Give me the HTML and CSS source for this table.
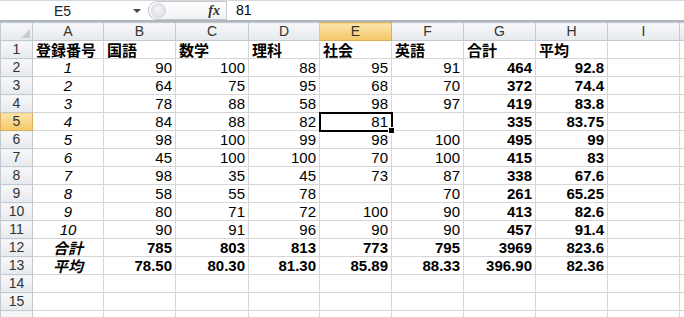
FILE: index.html
```html
<!DOCTYPE html>
<html lang="ja">
<head>
  <meta charset="UTF-8">
  <title>成績一覧</title>
  <link rel="stylesheet" href="styles.css">
</head>
<body>

  <div class="formula-bar">
    <div class="name-box">E5</div>
    <div class="name-arrow"></div>
    <div class="fx-zone">
      <span class="grip"></span>
      <span class="fx">fx</span>
    </div>
    <div class="formula-input">81</div>
  </div>

  <div class="sheet-wrap">
  <table class="sheet">
    <colgroup>
      <col style="width:32px">
      <col style="width:71px">
      <col style="width:72px">
      <col style="width:73px">
      <col style="width:71px">
      <col style="width:72px">
      <col style="width:72px">
      <col style="width:72px">
      <col style="width:72px">
      <col style="width:72px">
      <col style="width:72px">
    </colgroup>
    <tr class="col-heads">
      <th class="corner"><svg width="9" height="9" viewBox="0 0 9 9"><path d="M9 0 L9 9 L0 9 Z" fill="#c9ccd1"/></svg></th>
      <th>A</th><th>B</th><th>C</th><th>D</th><th class="sel">E</th><th>F</th><th>G</th><th>H</th><th>I</th><th></th>
    </tr>
    <tr class="titles">
      <th>1</th>
      <td>登録番号</td><td>国語</td><td>数学</td><td>理科</td><td>社会</td><td>英語</td><td>合計</td><td>平均</td><td></td><td></td>
    </tr>
    <tr><th>2</th><td class="id">1</td><td>90</td><td>100</td><td>88</td><td>95</td><td>91</td><td class="b">464</td><td class="b">92.8</td><td></td><td></td></tr>
    <tr><th>3</th><td class="id">2</td><td>64</td><td>75</td><td>95</td><td>68</td><td>70</td><td class="b">372</td><td class="b">74.4</td><td></td><td></td></tr>
    <tr><th>4</th><td class="id">3</td><td>78</td><td>88</td><td>58</td><td>98</td><td>97</td><td class="b">419</td><td class="b">83.8</td><td></td><td></td></tr>
    <tr><th class="sel">5</th><td class="id">4</td><td>84</td><td>88</td><td>82</td><td class="active">81</td><td></td><td class="b">335</td><td class="b">83.75</td><td></td><td></td></tr>
    <tr><th>6</th><td class="id">5</td><td>98</td><td>100</td><td>99</td><td>98</td><td>100</td><td class="b">495</td><td class="b">99</td><td></td><td></td></tr>
    <tr><th>7</th><td class="id">6</td><td>45</td><td>100</td><td>100</td><td>70</td><td>100</td><td class="b">415</td><td class="b">83</td><td></td><td></td></tr>
    <tr><th>8</th><td class="id">7</td><td>98</td><td>35</td><td>45</td><td>73</td><td>87</td><td class="b">338</td><td class="b">67.6</td><td></td><td></td></tr>
    <tr><th>9</th><td class="id">8</td><td>58</td><td>55</td><td>78</td><td></td><td>70</td><td class="b">261</td><td class="b">65.25</td><td></td><td></td></tr>
    <tr><th>10</th><td class="id">9</td><td>80</td><td>71</td><td>72</td><td>100</td><td>90</td><td class="b">413</td><td class="b">82.6</td><td></td><td></td></tr>
    <tr><th>11</th><td class="id">10</td><td>90</td><td>91</td><td>96</td><td>90</td><td>90</td><td class="b">457</td><td class="b">91.4</td><td></td><td></td></tr>
    <tr class="summary"><th>12</th><td class="label">合計</td><td>785</td><td>803</td><td>813</td><td>773</td><td>795</td><td>3969</td><td>823.6</td><td></td><td></td></tr>
    <tr class="summary"><th>13</th><td class="label">平均</td><td>78.50</td><td>80.30</td><td>81.30</td><td>85.89</td><td>88.33</td><td>396.90</td><td>82.36</td><td></td><td></td></tr>
    <tr><th>14</th><td></td><td></td><td></td><td></td><td></td><td></td><td></td><td></td><td></td><td></td></tr>
    <tr><th>15</th><td></td><td></td><td></td><td></td><td></td><td></td><td></td><td></td><td></td><td></td></tr>
    <tr><th></th><td></td><td></td><td></td><td></td><td></td><td></td><td></td><td></td><td></td><td></td></tr>
  </table>
  </div>

</body>
</html>
```

FILE: styles.css
```css
body {
  margin: 0;
  background-color: #ffffff;
  font-family: "Liberation Sans", "Noto Sans CJK JP", sans-serif;
  color: #000;
  overflow: hidden;
}

/* barra de fórmulas */
.formula-bar {
  display: flex;
  align-items: center;
  height: 19px;
  border-top: 1px solid #d5d8dc;
  border-bottom: 2px solid #aeb5be;
  font-size: 14px;
}

.name-box {
  width: 125px;
  text-align: center;
  color: #222;
}

.name-arrow {
  width: 23px;
  display: flex;
  justify-content: center;
}

.name-arrow::before {
  content: "";
  border-left: 4px solid transparent;
  border-right: 4px solid transparent;
  border-top: 4px solid #444;
}

.fx-zone {
  width: 77px;
  height: 17px;
  display: flex;
  align-items: center;
  border: 1px solid #c3c8ce;
  border-right: none;
  border-radius: 9px 0 0 9px;
  background: linear-gradient(#ffffff, #f1f2f4);
}

.grip {
  width: 13px;
  height: 13px;
  margin-left: 2px;
  border-radius: 50%;
  background: radial-gradient(circle at 45% 40%, #f4f5f6, #d5d9de);
  border: 1px solid #d0d4d9;
}

.fx {
  margin-left: auto;
  margin-right: 6px;
  font-family: "Liberation Serif", serif;
  font-style: italic;
  font-weight: bold;
  font-size: 14px;
  color: #333;
}

.formula-input {
  flex: 1;
  height: 19px;
  line-height: 19px;
  padding-left: 9px;
  border-left: 1px solid #c3c8ce;
}

/* planilha */
.sheet-wrap {
  width: 684px;
  overflow: hidden;
}

.sheet {
  border-collapse: collapse;
  table-layout: fixed;
  width: 751px;
}

.sheet tr {
  height: 18px;
}

.sheet th {
  padding: 0;
  font-weight: normal;
  font-size: 14px;
  color: #333;
  text-align: center;
  background: linear-gradient(#f7f8f9, #e6e9ed);
  border: 1px solid #c4c9cf;
  line-height: 17px;
}

.sheet .corner {
  text-align: right;
  vertical-align: bottom;
  padding: 0 2px 2px 0;
  line-height: 0;
}

.sheet th.sel {
  background: linear-gradient(#fbe6ad, #f4c765);
  border-color: #d9b15e;
  color: #333;
}

.sheet td {
  padding: 0 3px;
  border: 1px solid #d6d6d6;
  font-size: 15px;
  line-height: 17px;
  text-align: right;
  white-space: nowrap;
  overflow: hidden;
}

.titles td {
  text-align: left;
  font-weight: bold;
  font-family: "Noto Sans CJK JP", sans-serif;
  font-size: 15px;
}

.sheet td.id {
  text-align: center;
  font-style: italic;
}

.sheet td.b,
.summary td {
  font-weight: bold;
}

.sheet td.label {
  text-align: center;
  font-style: italic;
  font-family: "Noto Sans CJK JP", sans-serif;
}

/* célula ativa com alça de preenchimento */
.sheet td.active {
  position: relative;
  overflow: visible;
  outline: 2px solid #000;
  outline-offset: -1px;
}

.sheet td.active::after {
  content: "";
  position: absolute;
  right: -4px;
  bottom: -4px;
  width: 5px;
  height: 5px;
  background-color: #000;
  border: 1px solid #fff;
}
```
